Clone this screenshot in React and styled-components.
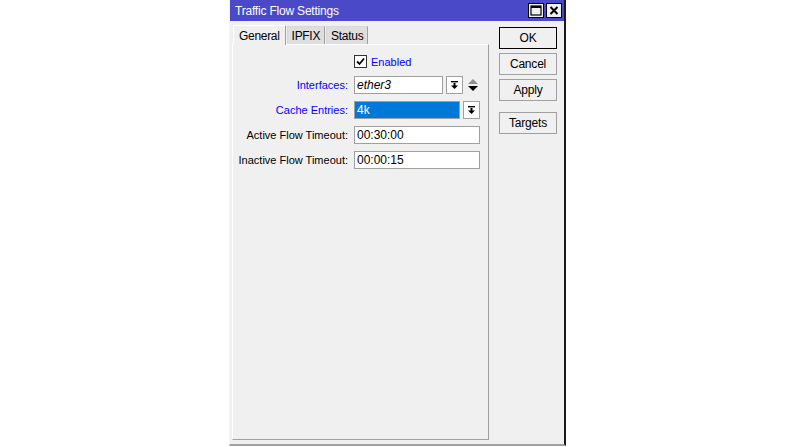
import React from 'react';
import styled, { createGlobalStyle } from 'styled-components';

const GlobalStyle = createGlobalStyle`
    html, body {
        margin: 0;
        padding: 0;
        background: #ffffff;
    }
    body {
        font-family: "Liberation Sans", Arial, sans-serif;
        font-size: 11px;
        color: #000000;
    }
`;

const Page = styled.div`
    width: 800px;
    height: 447px;
    display: flex;
    padding-left: 229px;
    box-sizing: border-box;
`;

const Window = styled.div`
    width: 337px;
    height: 446px;
    box-sizing: border-box;
    background: #f0f0f0;
    border-right: 2px solid #1a1a1a;
    border-bottom: 2px solid #a0a0a0;
    border-left: 1px solid #f6f6f6;
    display: flex;
    flex-direction: column;
`;

const TitleBar = styled.div`
    height: 21px;
    background: #4a4ac9;
    color: #ffffff;
    display: flex;
    align-items: center;
    padding-left: 5px;
    padding-right: 2px;
    font-size: 12px;
    letter-spacing: -0.2px;
`;

const Title = styled.div`
    flex: 1;
`;

const TitleButton = styled.div`
    width: 16px;
    height: 15px;
    box-sizing: border-box;
    background: #f0f0f0;
    border: 1px solid #000000;
    margin-left: 2px;
    display: flex;
    align-items: center;
    justify-content: center;
`;

const Body = styled.div`
    flex: 1;
    display: flex;
    padding: 3px 0 4px 2px;
`;

const TabArea = styled.div`
    width: 257px;
    display: flex;
    flex-direction: column;
`;

const TabRow = styled.div`
    display: flex;
    height: 20px;
    padding-left: 1px;
    align-items: flex-end;
`;

const Tab = styled.div`
    height: ${p => (p.active ? '20px' : '18px')};
    box-sizing: border-box;
    padding: 0 ${p => (p.active ? '5px' : '4px')};
    display: flex;
    align-items: center;
    font-size: 12px;
    letter-spacing: -0.3px;
    background: ${p => (p.active ? '#f0f0f0' : '#dedede')};
    border: 1px solid ${p => (p.active ? '#ffffff' : '#d8d8d8')};
    border-right-color: #a0a0a0;
    border-bottom: none;
    margin-right: 1px;
    position: relative;
    z-index: ${p => (p.active ? 1 : 0)};
    margin-bottom: ${p => (p.active ? '-1px' : '0')};
`;

const Panel = styled.div`
    flex: 1;
    border: 1px solid #ffffff;
    border-right-color: #a0a0a0;
    border-bottom-color: #a0a0a0;
    display: flex;
    flex-direction: column;
    padding-top: 10px;
`;

const Form = styled.div`
    display: grid;
    grid-template-columns: 115px 1fr;
    column-gap: 6px;
    row-gap: 7px;
    align-items: center;
`;

const Label = styled.div`
    text-align: right;
    white-space: nowrap;
    color: ${p => (p.link ? '#0000ff' : '#000000')};
`;

const Field = styled.div`
    display: flex;
    align-items: center;
    height: 18px;
`;

const CheckRow = styled.label`
    grid-column: 2;
    display: flex;
    align-items: center;
    color: #0000ff;
    height: 13px;
    margin-bottom: 1px;
`;

const CheckBox = styled.div`
    width: 13px;
    height: 13px;
    box-sizing: border-box;
    border: 1px solid #333333;
    background: #ffffff;
    margin-right: 4px;
    display: flex;
    align-items: center;
    justify-content: center;
`;

const Input = styled.div`
    width: ${p => p.width}px;
    height: 18px;
    box-sizing: border-box;
    border: 1px solid #a0a0a0;
    background: ${p => (p.selected ? '#0078d7' : '#ffffff')};
    color: ${p => (p.selected ? '#ffffff' : '#000000')};
    font-style: ${p => (p.italic ? 'italic' : 'normal')};
    padding-left: 2px;
    display: flex;
    align-items: center;
    font-size: 12px;
`;

const DropButton = styled.div`
    width: 17px;
    height: 18px;
    box-sizing: border-box;
    border: 1px solid #a0a0a0;
    background: #ffffff;
    margin-left: 3px;
    display: flex;
    align-items: center;
    justify-content: center;
`;

const Spin = styled.div`
    margin-left: 4px;
    display: flex;
    align-items: center;
`;

const ButtonColumn = styled.div`
    display: flex;
    flex-direction: column;
    margin-left: 10px;
    padding-top: 3px;
`;

const Button = styled.div`
    width: 58px;
    height: 22px;
    box-sizing: border-box;
    border: 1px solid ${p => (p.primary ? '#000000' : '#a0a0a0')};
    background: #f0f0f0;
    display: flex;
    align-items: center;
    justify-content: center;
    font-size: 12px;
    letter-spacing: -0.2px;
    margin-bottom: ${p => p.gap || 4}px;
    box-shadow: ${p => (p.primary ? 'inset 0 0 0 1px #f0f0f0' : 'none')};
`;

const DropIcon = () => (
    <svg width="9" height="9" viewBox="0 0 9 9">
        <rect x="1" y="0" width="7" height="1.4" fill="#000" />
        <rect x="3.5" y="2" width="2" height="3" fill="#000" />
        <polygon points="1,4.5 8,4.5 4.5,8" fill="#000" />
    </svg>
);

const SpinIcon = () => (
    <svg width="12" height="14" viewBox="0 0 12 14">
        <polygon points="1,6 11,6 6,1" fill="#909090" />
        <polygon points="1,8 11,8 6,13" fill="#000" />
    </svg>
);

const MaxIcon = () => (
    <svg width="12" height="11" viewBox="0 0 12 11">
        <rect x="1" y="1" width="10" height="9" fill="none" stroke="#000" strokeWidth="1.2" />
        <rect x="1" y="1" width="10" height="2" fill="#000" />
    </svg>
);

const CloseIcon = () => (
    <svg width="10" height="9" viewBox="0 0 10 9">
        <path d="M1.5 1 L8.5 8 M8.5 1 L1.5 8" stroke="#000" strokeWidth="2" />
    </svg>
);

const CheckMark = () => (
    <svg width="9" height="9" viewBox="0 0 9 9">
        <path d="M1 4.5 L3.5 7 L8 1.5" fill="none" stroke="#000" strokeWidth="1.8" />
    </svg>
);

export default function App() {
    return (
        <>
            <GlobalStyle />
            <Page>
                <Window>
                    <TitleBar>
                        <Title>Traffic Flow Settings</Title>
                        <TitleButton><MaxIcon /></TitleButton>
                        <TitleButton><CloseIcon /></TitleButton>
                    </TitleBar>
                    <Body>
                        <TabArea>
                            <TabRow>
                                <Tab active>General</Tab>
                                <Tab>IPFIX</Tab>
                                <Tab>Status</Tab>
                            </TabRow>
                            <Panel>
                                <Form>
                                    <CheckRow>
                                        <CheckBox><CheckMark /></CheckBox>
                                        Enabled
                                    </CheckRow>

                                    <Label link>Interfaces:</Label>
                                    <Field>
                                        <Input width={89} italic>ether3</Input>
                                        <DropButton><DropIcon /></DropButton>
                                        <Spin><SpinIcon /></Spin>
                                    </Field>

                                    <Label link>Cache Entries:</Label>
                                    <Field>
                                        <Input width={106} selected>4k</Input>
                                        <DropButton><DropIcon /></DropButton>
                                    </Field>

                                    <Label>Active Flow Timeout:</Label>
                                    <Field>
                                        <Input width={126}>00:30:00</Input>
                                    </Field>

                                    <Label>Inactive Flow Timeout:</Label>
                                    <Field>
                                        <Input width={126}>00:00:15</Input>
                                    </Field>
                                </Form>
                            </Panel>
                        </TabArea>
                        <ButtonColumn>
                            <Button primary>OK</Button>
                            <Button>Cancel</Button>
                            <Button gap={11}>Apply</Button>
                            <Button>Targets</Button>
                        </ButtonColumn>
                    </Body>
                </Window>
            </Page>
        </>
    );
}
